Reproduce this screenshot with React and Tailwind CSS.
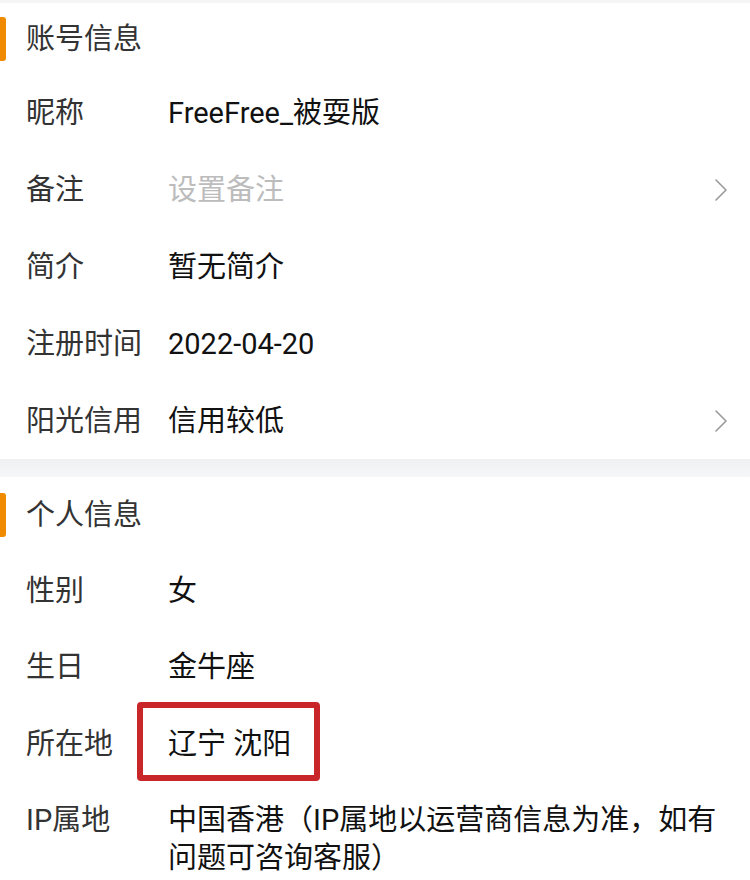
const Chevron = () => (
  <svg width="14" height="24" viewBox="0 0 14 24" fill="none" className="shrink-0">
    <path d="M2 2 L12 12 L2 22" stroke="#9a9a9a" strokeWidth="1.6" strokeLinecap="round" strokeLinejoin="round" />
  </svg>
);

const SectionHeader = ({ title, h }) => (
  <div className={`relative flex items-center ${h}`}>
    <div className="absolute left-0 top-1/2 -translate-y-1/2 w-[6px] h-[44px] rounded-r-[3px] bg-[#f08a00]" />
    <span className="pl-[26px] text-[29px] text-[#333]">{title}</span>
  </div>
);

const Row = ({ label, value, muted, arrow, h = "h-[77px]", children }) => (
  <div className={`flex items-center pl-[26px] pr-[22px] ${h}`}>
    <span className="w-[142px] shrink-0 text-[29px] text-[#333]">{label}</span>
    <span className={`flex-1 text-[29px] ${muted ? "text-[#bcbcbc]" : "text-[#111]"}`}>
      {children || value}
    </span>
    {arrow && <Chevron />}
  </div>
);

const App = () => {
  return (
    <div
      className="w-[750px] h-[880px] overflow-hidden bg-white leading-[40px]"
      style={{ fontFamily: 'Roboto, "Noto Sans CJK SC", sans-serif' }}
    >
      <div className="border-t-[3px] border-[#f5f5f5]" />
      <SectionHeader title="账号信息" h="h-[71px]" />
      <Row label="昵称" value="FreeFree_被耍版" />
      <Row label="备注" value="设置备注" muted arrow />
      <Row label="简介" value="暂无简介" />
      <Row label="注册时间" value="2022-04-20" />
      <Row label="阳光信用" value="信用较低" arrow />

      <div className="h-[18px] bg-gradient-to-b from-[#eef0f1] to-[#f6f7f8]" />

      <SectionHeader title="个人信息" h="h-[76px]" />
      <Row label="性别" value="女" h="h-[75px]" />
      <Row label="生日" value="金牛座" h="h-[77px]" />
      <Row label="所在地" h="h-[77px]">
        <span className="relative inline-block">
          辽宁 沈阳
          <span className="absolute left-[-31px] top-[-22px] w-[183px] h-[79px] border-[6px] border-[#c9262a] rounded-[4px]" />
        </span>
      </Row>
      <div className="flex pl-[26px] pr-[22px] pt-[19px]">
        <span className="w-[142px] shrink-0 text-[29px] text-[#333] leading-[38px]">IP属地</span>
        <span className="flex-1 text-[29px] text-[#111] leading-[38px]">
          中国香港（IP属地以运营商信息为准，如有问题可咨询客服）
        </span>
      </div>
    </div>
  );
};

export default App;
